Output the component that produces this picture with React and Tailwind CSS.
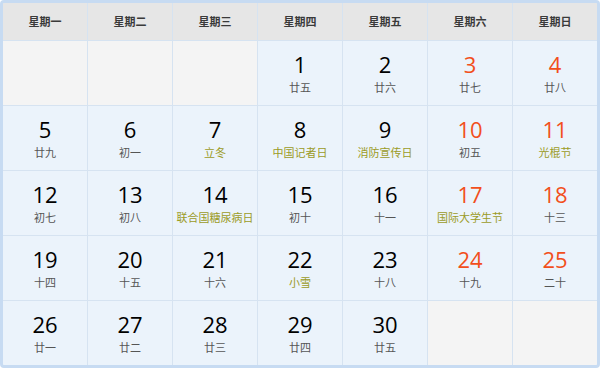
import React from "react";

const heads = ["星期一", "星期二", "星期三", "星期四", "星期五", "星期六", "星期日"];

const lunar = {
  1: "廿五", 2: "廿六", 3: "廿七", 4: "廿八",
  5: "廿九", 6: "初一", 7: ["立冬"], 8: ["中国记者日"], 9: ["消防宣传日"], 10: "初五", 11: ["光棍节"],
  12: "初七", 13: "初八", 14: ["联合国糖尿病日"], 15: "初十", 16: "十一", 17: ["国际大学生节"], 18: "十三",
  19: "十四", 20: "十五", 21: "十六", 22: ["小雪"], 23: "十八", 24: "十九", 25: "二十",
  26: "廿一", 27: "廿二", 28: "廿三", 29: "廿四", 30: "廿五",
};

export default function App() {
  const cells = [];
  for (let i = 0; i < 3; i++) cells.push(null);
  for (let d = 1; d <= 30; d++) cells.push(d);
  while (cells.length < 35) cells.push(null);

  return (
    <div className="w-[600px] h-[368px] bg-white">
      <div className="w-[600px] h-[368px] border-[3px] border-[#c7dbf2] rounded-[4px] overflow-hidden bg-[#d6e3f1]">
        <div className="grid grid-cols-7 gap-px" style={{ gridTemplateRows: "37px repeat(5, 64px)" }}>
          {heads.map((h) => (
            <div
              key={h}
              className="bg-[#e6e6e6] flex items-center justify-center text-[11px] font-bold text-[#3a3a3a]"
              style={{ fontFamily: '"Noto Sans CJK SC", sans-serif' }}
            >
              {h}
            </div>
          ))}
          {cells.map((d, i) => {
            if (d === null) return <div key={i} className="bg-[#f4f4f4]" />;
            const col = i % 7;
            const weekend = col >= 5;
            const l = lunar[d];
            const fest = Array.isArray(l);
            const txt = fest ? l[0] : l;
            return (
              <div key={i} className="bg-[#ebf3fb] flex flex-col items-center pt-[8px]">
                <div
                  className={
                    "text-[22px] leading-[30px] font-medium " + (weekend ? "text-[#f24f1b]" : "text-black")
                  }
                  style={{ fontFamily: '"Open Sans", sans-serif' }}
                >
                  {d}
                </div>
                <div
                  className={"text-[11px] leading-[12px] mt-[2px] " + (fest ? "text-[#9b9b1f]" : "text-[#555]")}
                  style={{ fontFamily: '"Noto Sans CJK SC", sans-serif' }}
                >
                  {txt}
                </div>
              </div>
            );
          })}
        </div>
      </div>
    </div>
  );
}
